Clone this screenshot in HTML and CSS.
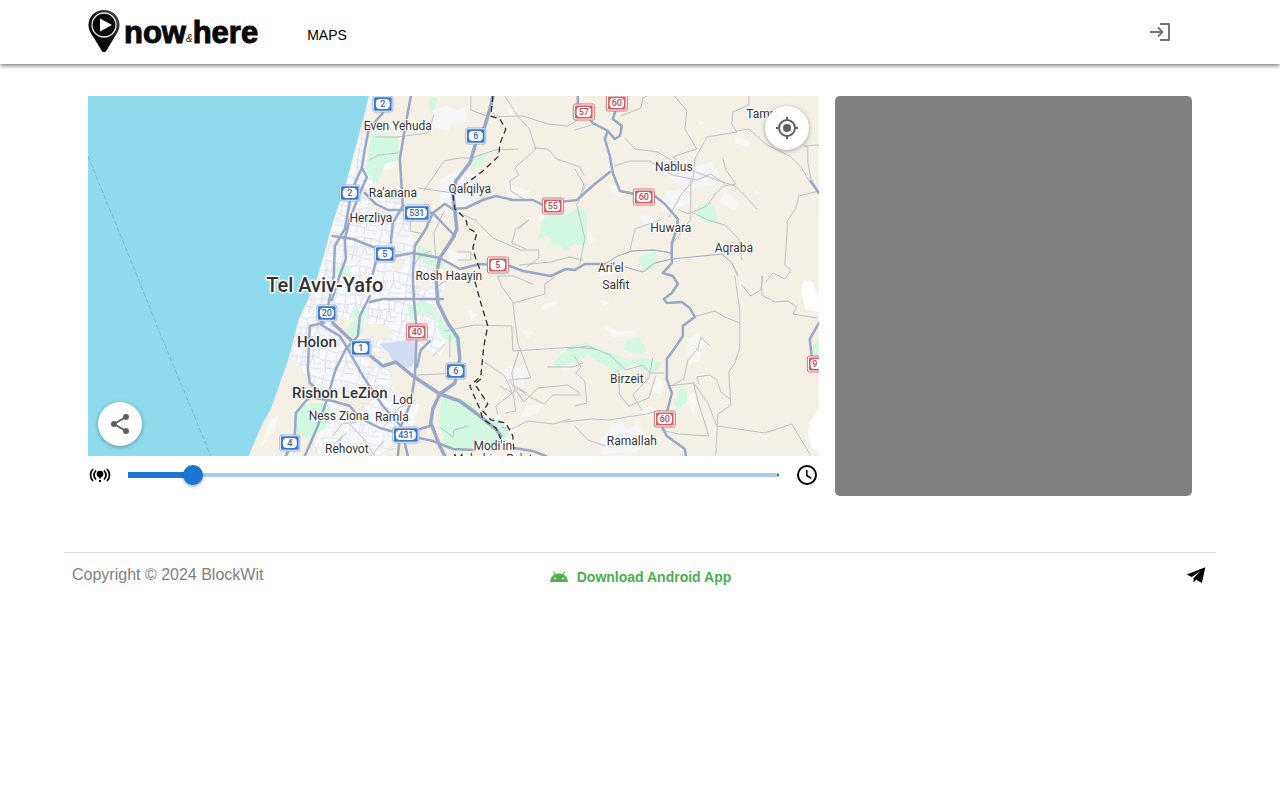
FILE: index.html
```html
<!DOCTYPE html>
<html lang="en">
<head>
<meta charset="utf-8">
<meta name="viewport" content="width=device-width, initial-scale=1">
<title>now&amp;here</title>
<link rel="stylesheet" href="styles.css">
</head>
<body>
<header class="topbar">
  <div class="topbar-inner">
    <a class="logo" href="#" aria-label="now&amp;here home">
      <svg class="logo-pin" viewBox="0 0 32 44" aria-hidden="true">
        <defs><linearGradient id="pinShade" x1="1" y1="0" x2="0.4" y2="0.6"><stop offset="0" stop-color="#555"/><stop offset="1" stop-color="#050505"/></linearGradient></defs>
        <path d="M16 0C7 0 .5 6.500.5 15c0 5 2.500 8.500 5.500 13l7.500 12.500c1.200 2 3.800 2 5 0L26 28c3-4.500 5.500-8 5.500-13C31.500 6.500 25 0 16 0z" fill="url(#pinShade)"/>
        <circle cx="16" cy="15" r="12" fill="#080808" stroke="#e8e8e8" stroke-width="1.300"/>
        <path d="M12 8.500v13L24 15z" fill="#fff"/>
      </svg>
      <span class="logo-word">now</span><span class="logo-amp">&amp;</span><span class="logo-word">here</span>
    </a>
    <nav class="nav"><a href="#">MAPS</a></nav>
    <button class="login" type="button" aria-label="Log in">
      <svg class="icon" viewBox="0 0 24 24" fill="none" stroke="currentColor" stroke-width="2" stroke-linejoin="round"><path d="M12 4h9v16h-9M2 12h12M10 7.500l4.500 4.500-4.500 4.500"/></svg>
    </button>
  </div>
</header>

<main class="content">
  <section class="viewer">
    <div class="map">
      <svg class="map-canvas" viewBox="88 96 731 360" preserveAspectRatio="xMidYMid slice" role="img" aria-label="Map of Tel Aviv-Yafo and surroundings">
        <defs>
          <pattern id="streets" width="34" height="29" patternUnits="userSpaceOnUse" patternTransform="rotate(9)"><path d="M0 4l12 2 9-3 13 1M5 0l-1 14 2 15M14 6l1 9-1 14M0 15l15 0 11-3 8 3M23 3l2 9-3 17M4 22l18 1M25 12l3 8 6-1M30 4v10M9 14v9M18 14l-1 8M24 25l10-1" fill="none" stroke="#d9dfeb" stroke-width="1"/></pattern>
          <g id="blue"><rect x="-10" y="-8" width="20" height="16" rx="2" fill="#fff" stroke="#7fa3d8" stroke-width=".8"/><rect x="-8.800" y="-6.800" width="17.600" height="13.600" rx="1" fill="#3b78c9"/><rect x="-7" y="-5" width="14" height="10" rx="4" fill="#fff"/></g>
          <g id="bluewide"><rect x="-13" y="-8" width="26" height="16" rx="2" fill="#fff" stroke="#7fa3d8" stroke-width=".8"/><rect x="-11.800" y="-6.800" width="23.600" height="13.600" rx="1" fill="#3b78c9"/><rect x="-10" y="-5" width="20" height="10" rx="4" fill="#fff"/></g>
          <g id="red"><rect x="-10.500" y="-8" width="21" height="16" rx="2" fill="#fff" stroke="#dc6f76" stroke-width="1"/><rect x="-8.800" y="-6.500" width="17.600" height="13" rx="1" fill="#d05f66"/><rect x="-7.200" y="-5" width="14.400" height="10" rx="3.500" fill="#fff"/></g>
        </defs>
        <rect x="88" y="96" width="731" height="360" fill="#f4f0e6"/>
        <path class="sea" d="M88 96H369L362 124 355 150 346 184 334 219 319 272 312 291 299 319 289 358 271 409 262 425 249 456H88z"/>
        <path class="boundary" d="M88 156 137 275 158 328 178 376 211 456"/>

        <g class="city">
          <path d="M369 98 362 128 346 187 334 222 320 274 300 320 292 358 316 390 350 398 386 402 398 380 380 350 406 338 430 312 436 280 414 246 408 205 380 196 372 170 365 150z"/>
          <path d="M392 258 440 264 450 280 434 310 446 340 440 356 410 340z"/>
          <path d="M300 405l30-5 25 15 20-15 45 4-10 30-30 20-60 2z"/>
        </g>
        <g class="village">
          <path d="M440 180l20-12 18 8 2 20-24 20-16-5zM432 110l14-4 12 4 10-3-2 16-14 2-4 6-13-4zM652 166l22-6 24 6 14-4 8 14-10 10-14 0-8 6-16-14zM667 192l14-3 14 12-22 8-12 3 0-10zM724 190l16 14-6 6-14-7zM600 440l18-22 10 12 12-10 5 20-8 12-36 2zM484 420l14-4 8 4 10 24-22 6-8-14zM640 214l14 2 6 10-16 4zM598 264l24-2-4 12-20 3z"/>
        </g>
        <path d="M369 98 346 187 320 274 300 320 292 358 316 390 386 402 398 380 380 350 406 338 438 350 446 330 436 310 448 280 414 246 408 205 380 196 365 150z" fill="url(#streets)"/>
        <path d="M300 410l70-8 40 12-14 36-80 4z" fill="url(#streets)" opacity=".65"/>
        <g class="sand">
          <path d="M292 358 303 369 306 394 294 416 289 440 281 456H249L262 425 271 409zM330 312l28 12 28 0 10 10-16 6-22-2-12 4-14-16zM404 196l26 16-10 16-10 0zM394 260l12 0-4 10-10 2zM388 366l24 10-2 24-14 2zM364 348l14 6-4 12-10-8zM374 200l10 6-6 8-10-8zM420 270l12 2-2 16-10 2z"/>
        </g>
        <g class="pale">
          <path d="M270 420l8-4-3 15-9 10-6 8zM384 150l12 4 2 12-14 4zM447 250l18 3-4 12-12-4zM510 185l20 6-4 9-17-5zM575 235l14-4 8 10-14 6zM540 210l16-5 5 8-20 8zM610 185l18 3-5 9-11-3zM735 135l16 8-4 4-12-4zM544 304l16-3-7 7-12 2zM603 324l16 8 18-2-4 6-20 2zM500 370l28-7-4 22-13 5zM526 406l18-2-7 10-16 4zM687 340l12-8 6 11-6 18-10 4zM655 375l9 7-3 13-10-5zM645 405l15 5-4 9-14-4zM505 420l14 8-6 9-11-9zM693 390l5 12-5 11-6-10zM508 107l6-5 4 9-8 4zM698 120l6 2-3 5zM560 360l14 4-8 8-10-4zM468 310l10 4-6 8zM522 330l12 2-6 6zM754 190l6 2-4 4zM600 300l10 2-6 5z"/>
        </g>
        <g class="park">
          <path d="M371 133l27 5 1 22-14 4-7 19-12-10zM472 157l17-5-7 13-11 5zM430 96l8 3-6 13-3-3zM543 219l12-6 12 2 13-9 7 7 1 33-13-2-9 8-7-7-7 0-4-10-10 4zM698 206l12-4 6 9 3 13-14-2-7-5zM640 256l17-5-1 17-11 2-6-8zM418 245l18 10 10 15-16-4-14-8zM407 308l15-8 11 5 4 15-13-8-13 7zM436 312l16 20 8 0 2 16-21-12zM553 363l19-18 15-2 22 9 22 8 14-2 18 5-9 11-22-9-15 8-29-18-30 14zM626 340l14-3 7 15-13 2-10-4zM680 387l8 3-1 12-9 7-4-6zM442 393l30 10 12 14 18 4 8 13-12 12-36 6-16-5-7-24zM298 405l24-3 9 5-6 22-18 10-11-7zM346 330l14-18 7-2-5 25-10 1zM353 310l8-4-4 12-8 0zM333 268l14-3 5 8-12 5z"/>
        </g>
        <path d="M379 344l29-4 9 3 0 19-8 6-15-5-5-10z" fill="#d2dcf4"/>
        <path d="M804 281l8 0 7 17v14l-13-3-5-18zM810 423l9-16v46l-8-7-3-12z" fill="#fff"/>
        <path d="M813 348l6-10v17l-6 1z" fill="#d3f8e2"/>

        <g class="lane">
          <path d="M471 96v14l16 6M491 117l32-1 25 8 20 2 16-10M505 96l14 22 10 10 7 21-21 19 4 7-9 6 1 10 13 8M534 148l14 1 9 10 23 8 4 8M472 158l23-8 24-1M424 191l20-30 16-3 14 0M419 188l34 5M376 137l22 0 30-4 6-18M370 160l9-5 19-2"/>
          <path d="M455 211l20 9 18 18 28 12 18 0v8l-12 9M519 229l10-9-13 9-4 14 14 6M520 265l31-3 19-5 13 3M436 258l-2-25 10-21M424 234l-14-3 1-10M458 260h13v-8h-14"/>
          <path d="M575 130l20-6M621 116l20-8 2-10 14-7 16 3 14 17-2 18 12 20-19 6-5 2 4 3M625 138l10 11 23 3 17 10 16 8 23 9 21 7 13 13 9 10"/>
          <path d="M615 166l15-5 20 0 22 14 25 5 14-6 14 10M749 96v9l-16 7-1 12 5 8-30 5-12 22-2 22-12 14-12 22M737 131l12-2 18 16 23 11 12 12 9 16M723 158l3 12 10 14-12 2-7 6-10 14-18 8-10-4M811 179l-3-17v-15l-4-1 15-1M819 191l-20 5-3 12-8 12-3 45 6 5-6 9-12-6-7 9M691 179v40l-17 23-4 13M692 212l16 8 17 5 14 14 3 21M660 220l-25 9-5 22M575 169l9 15-4 13"/>
          <path d="M632 251l20-1 16 2M586 184l-9 21 8 33-5 26M498 276l4 11 12 16 31-9v-10l10-7M513 303l5 40 13 35-22 2 15 22 14-14 30-3 12 8M445 331l30-6 37 1 1 25 62-4 20 2M519 351l-7 22 3 18-19 15 2 8M568 349l20-3 22 9 16 15 17-5 7 8 14 0M548 367l25 0 10-4M515 386l12 7M565 422l27-3 18 1 17-3 20-3 14-4"/>
          <path d="M575 357l6 10-5 6 9 8 2 22-12 3M575 426l13 14 18 6M642 410l-9-15 16-17 4-20M656 376l-7 22-20 8-9-11-2-24M668 386l26-3 14 20 9 23 28 4 20 3 27-9 18 30M673 385l11-6 4-19 10-11 3-12 9 9M694 317l10-3 11-3 10 6 15 6M735 276l5 35v37l-5 15-6 9 2 33-13 9-2 41M699 384l-2-7 13-2 7 5 4 12 9 7M661 430l18 4 30 2-11-35-4-17M762 276v19l13 7 13-1 9 6-4 7 24 4M742 285l9 11 10-6 2-14"/>
          <path d="M498 276l16 0 18 8M500 386l13 7 3 18-10 2M517 388l10 7 17 9 9-9 27 0M483 361l22 15 7 16M468 426l-14 4-1 7-12-9M501 427l11 2 16-8 26 3 16-5"/>
          <path d="M438 286l11-7-1-8M413 267l8-12 10-4M450 357v-22M433 356l12-12M417 375l22-1 18-1M333 436l9-12 15-2M342 436l-6 18M371 456l13-15M385 426l14-18 16-8M350 424l14 15 11 17M333 445l14-12"/>
        </g>
        <g class="road">
          <path d="M383 113 369 129 365 149 362 168 352 190 345 229 335 246 334 276 327 313M362 168 367 177 360 193 350 219 345 239 346 259 339 278 332 300"/>
          <path d="M411 96 405 129 400 159 403 206 393 223 391 243M376 248v13l-3 13"/>
          <path d="M365 193 376 204 388 210 403 210 433 213 445 204 453 209 466 208 483 200 496 196 513 200 533 200 543 205 560 202 577 200 595 184 610 172"/>
          <path d="M578 96v8l15 19 15 8 7 8 5-3 2-10-9-7 4-12v-10M608 131l-3 8 5 17 3 17 7 18 15 3 20 2 10 8 13 15-1 10-5 14v20l-9 10"/>
          <path d="M663 273l10 3 5 8-6 9-8 6 3 4 15-1 8 6 5 9-12 9v10l-8 12-8 11v20l5 14-4 16-6 17 5 10 18 13 1 7"/>
          <path d="M333 236 353 239 376 248 396 256 413 253 440 258 460 269 480 264 510 266 523 271 551 276 566 269 575 270 585 264 605 264"/>
          <path d="M433 213 426 229 415 246 413 276 414 299 417 330 415 376 411 403 401 426 398 456M401 426l7 30M433 213 455 236"/>
          <path d="M370 302 383 299 413 299 443 299M370 296 360 316 358 336 346 349 336 369 333 379 325 406 318 426 305 456"/>
          <path d="M348 349 363 376 383 406 401 426M327 313l-7 11 20 12 8 13M310 326 308 369 310 383 318 390 306 401 296 413 295 436 286 456M310 326l14-3"/>
          <path d="M310 397 333 401 350 406 360 418 380 428 406 435 433 441 453 449 475 450M420 429 430 426 433 409M514 448l19 3 13 5M430 341l-9 9-4 17"/>
          <path d="M811 181 819 193M819 323 810 339 812 358 818 369"/>
        </g>
        <g class="highway">
          <path d="M493 96 491 106 485 126 476 143 470 163 456 181 453 193 455 211 457 229 453 238 440 258 436 276 438 303 448 323 458 338 460 359 455 383 440 394 433 409 431 423 440 446 445 456"/>
          <path d="M333 323 350 339 361 348 383 366 396 362 413 376 440 394 460 401 476 413 496 429 501 436"/>
        </g>
        <g class="lane lane-strong">
          <path d="M605 264 618 256 632 251 655 250 670 253M625 267l18 5 12-9 17-4 50-5 10 9 6 13"/>
        </g>
        <path class="border" d="M493 96l-2 20 9 3 6 10-6 15-1 12-16 15-17 13-13 10 2 15 11 10 2 9 9 5-4 15 3 11 4 10-5 12 6 22 7 23-4 20-3 30-11 10 10 23 3 10 13 9 5 11M481 379l-6 5 13 20-5 7 8 9 15 3 7 13 1 17"/>

        <g class="shields">
          <use href="#blue" x="383" y="104"/><text x="383" y="107">2</text>
          <use href="#blue" x="476" y="136"/><text x="476" y="139">6</text>
          <use href="#blue" x="350" y="193"/><text x="350" y="196">2</text>
          <use href="#bluewide" x="417" y="213"/><text x="417" y="216">531</text>
          <use href="#blue" x="385" y="254"/><text x="385" y="257">5</text>
          <use href="#blue" x="327" y="313"/><text x="327" y="316">20</text>
          <use href="#blue" x="361" y="348"/><text x="361" y="351">1</text>
          <use href="#blue" x="456" y="371"/><text x="456" y="374">6</text>
          <use href="#bluewide" x="406" y="435"/><text x="406" y="438">431</text>
          <use href="#blue" x="290" y="443"/><text x="290" y="446">4</text>
        </g>
        <g class="shields shields-red">
          <use href="#red" x="617" y="103"/><text x="617" y="106">60</text>
          <use href="#red" x="584" y="112"/><text x="584" y="115">57</text>
          <use href="#red" x="644" y="197"/><text x="644" y="200">60</text>
          <use href="#red" x="553" y="206"/><text x="553" y="209">55</text>
          <use href="#red" x="498" y="265"/><text x="498" y="268">5</text>
          <use href="#red" x="417" y="332"/><text x="417" y="335">40</text>
          <use href="#red" x="665" y="419"/><text x="665" y="422">60</text>
          <use href="#red" x="818" y="364"/><text x="815" y="367">9</text>
        </g>
        <g class="towns">
          <text x="398" y="130">Even Yehuda</text>
          <text x="393" y="197">Ra'anana</text>
          <text x="371" y="222">Herzliya</text>
          <text x="470" y="193">Qalqilya</text>
          <text x="449" y="280">Rosh Haayin</text>
          <text x="674" y="171">Nablus</text>
          <text x="671" y="232">Huwara</text>
          <text x="734" y="252">Aqraba</text>
          <text x="611" y="272">Ari'el</text>
          <text x="616" y="289">Salfit</text>
          <text x="627" y="383">Birzeit</text>
          <text x="632" y="445">Ramallah</text>
          <text x="770" y="118">Tammun</text>
          <text x="403" y="404">Lod</text>
          <text x="339" y="420">Ness Ziona</text>
          <text x="392" y="421">Ramla</text>
          <text x="347" y="453">Rehovot</text>
          <text x="493" y="450">Modi'in</text>
          <text x="493" y="463">Makabim-Re'ut</text>
        </g>
        <g class="towns cities">
          <text x="317" y="347">Holon</text>
          <text x="340" y="398">Rishon LeZion</text>
          <text class="capital" x="325" y="292">Tel Aviv-Yafo</text>
        </g>
      </svg>
      <button class="fab fab-locate" type="button" aria-label="My location">
        <svg class="icon" viewBox="0 0 24 24" fill="none" stroke="currentColor" stroke-width="2"><circle cx="12" cy="12" r="8"/><circle cx="12" cy="12" r="4" fill="currentColor" stroke="none"/><path d="M12 1v3M12 20v3M1 12h3M20 12h3"/></svg>
      </button>
      <button class="fab fab-share" type="button" aria-label="Share">
        <svg class="icon" viewBox="0 0 24 24" fill="currentColor"><path d="M18 5 6 12l12 7" fill="none" stroke="currentColor" stroke-width="2"/><circle cx="18" cy="5" r="3"/><circle cx="6" cy="12" r="3"/><circle cx="18" cy="19" r="3"/></svg>
      </button>
    </div>
    <div class="timeline">
      <svg class="icon" viewBox="0 0 24 24" fill="none" stroke="currentColor" stroke-width="1.700" aria-hidden="true"><path d="M5 6c-3.300 3.500-3.300 8.500 0 12M8 7.500c-2.400 2.700-2.400 6.300 0 9M19 6c3.300 3.500 3.300 8.500 0 12M16 7.500c2.400 2.700 2.400 6.300 0 9"/><circle cx="12" cy="11" r="3.300" fill="currentColor" stroke="none"/><path d="M12 12v3.500M12 17v2" stroke-width="2"/></svg>
      <input class="slider" type="range" min="0" max="100" value="10" aria-label="Time">
      <svg class="icon" viewBox="0 0 24 24" fill="none" stroke="currentColor" stroke-width="2" aria-hidden="true"><circle cx="12" cy="12" r="9"/><path d="M11.800 7v5.500l4.500 2.800" stroke-width="1.500"/></svg>
    </div>
  </section>
  <aside class="player" aria-label="Video"></aside>
</main>

<footer class="footer">
  <span class="copyright">Copyright © 2024 BlockWit</span>
  <a class="download" href="#">
    <svg class="android" viewBox="0 0 20 20" fill="currentColor" aria-hidden="true"><path d="M1 15c.300-3.500 2-6 4.600-7.500L4 4.800l.8-.5 1.700 2.800c2.200-.9 4.800-.9 7 0l1.700-2.800.8.500-1.600 2.700C17 9 18.700 11.500 19 15z"/><circle cx="6" cy="11.500" r=".9" fill="#fff"/><circle cx="14" cy="11.500" r=".9" fill="#fff"/></svg>
    Download Android App
  </a>
  <a class="telegram" href="#" aria-label="Telegram">
    <svg class="plane" viewBox="0 0 20 20" fill="currentColor"><path d="M19.300 2.200.6 9.400l5.200 2.500L15 5.800 7.600 13l-.2 4.300 2.900-2.500 5.600 3.100z"/></svg>
  </a>
</footer>
</body>
</html>
```
FILE: styles.css
```css
* { box-sizing: border-box; }

body {
  margin: 0;
  background: #fff;
  color: #000;
  font-family: "Liberation Sans", Arial, sans-serif;
  font-size: 16px;
}

a { color: inherit; text-decoration: none; }
button { border: 0; background: none; padding: 0; cursor: pointer; font: inherit; }
.icon { display: block; width: 24px; height: 24px; flex: none; }

.topbar {
  background: #fff;
  box-shadow: 0 2px 4px -1px rgba(0, 0, 0, .3), 0 2px 4px rgba(0, 0, 0, .22), 0 1px 6px rgba(0, 0, 0, .12);
}
.topbar-inner {
  display: flex;
  align-items: center;
  max-width: 1152px;
  min-height: 64px;
  margin: 0 auto;
  padding: 0 24px;
}
.logo { display: flex; align-items: center; color: #080808; }
.logo-pin { width: 32px; height: 44px; margin-right: 4px; }
.logo-word { padding-top: 2px; font-size: 31px; line-height: 36px; font-weight: 700; -webkit-text-stroke: 1px #080808; }
.logo-amp { font-size: 10px; font-style: italic; padding-top: 12px; }
.nav { margin-left: 49px; padding-top: 6px; font-size: 14px; line-height: 20px; }
.login { margin-left: auto; padding: 8px; margin-right: 12px; color: #757575; }

.content {
  display: grid;
  grid-template-columns: repeat(12, minmax(0, 1fr));
  gap: 16px;
  max-width: 1152px;
  margin: 0 auto;
  padding: 32px 24px 56px;
}
.viewer { grid-column: span 8; }
.player { grid-column: span 4; min-height: 400px; border-radius: 5px; background: #808080; }

.map { position: relative; height: 360px; overflow: hidden; }
.map-canvas { display: block; width: 100%; height: 100%; }
.fab {
  position: absolute;
  display: grid;
  place-items: center;
  width: 44px;
  height: 44px;
  border-radius: 50%;
  background: #fff;
  color: #5f5f64;
  box-shadow: 0 1px 4px rgba(0, 0, 0, .35);
}
.fab-locate { top: 10px; right: 10px; }
.fab-share { bottom: 10px; left: 10px; }

.sea { fill: #90daee; }
.boundary { fill: none; stroke: #6bc3d2; stroke-width: 1; stroke-dasharray: 5 2; }
.city { fill: #f8f8fa; }
.village { fill: #f5f5f7; }
.sand { fill: #f4f0e6; }
.pale { fill: #f8f6f2; }
.park { fill: #d3f8e2; }
.lane, .road, .highway { fill: none; stroke-linejoin: round; stroke-linecap: round; }
.lane { stroke: #bcc1cc; stroke-width: 1; }
.lane-strong { stroke: #9faabf; }
.road { stroke: #9aa8c5; stroke-width: 2.5; }
.highway { stroke: #9aa8c5; stroke-width: 3.5; }
.border { fill: none; stroke: #2e2e33; stroke-width: 1.3; stroke-dasharray: 6 4; }
.shields { font: 500 9px Roboto, sans-serif; fill: #3566ad; text-anchor: middle; }
.shields-red { fill: #bf4853; }
.towns {
  font: 400 12px Roboto, sans-serif;
  fill: #333238;
  stroke: #fff;
  stroke-width: 2px;
  stroke-linejoin: round;
  paint-order: stroke;
  text-anchor: middle;
}
.cities { font-size: 15px; font-weight: 500; }
.capital { font-size: 20px; stroke-width: 3px; }

.timeline { display: flex; align-items: center; gap: 16px; height: 38px; }
.slider {
  appearance: none;
  flex: 1;
  min-width: 0;
  height: 20px;
  margin: 0 -10px;
  background:
    linear-gradient(#1976d2, #1976d2) 10px center / calc((100% - 20px) * .1) 6px no-repeat,
    linear-gradient(#1976d2, #1976d2) right 10px center / 2px 2px no-repeat,
    linear-gradient(#a9c9eb, #a9c9eb) center / calc(100% - 20px) 4px no-repeat;
}
.slider::-webkit-slider-thumb {
  appearance: none;
  width: 20px;
  height: 20px;
  border-radius: 50%;
  background: #1976d2;
  box-shadow: 0 2px 3px rgba(0, 0, 0, .3);
}

.footer {
  display: grid;
  grid-template-columns: 1fr auto 1fr;
  align-items: center;
  max-width: 1152px;
  margin: 0 auto;
  padding: 8px;
  border-top: 1px solid #dcdcdc;
}
.copyright { color: #808080; line-height: 28px; }
.download {
  display: flex;
  align-items: center;
  gap: 8px;
  padding-top: 4px;
  color: #4caf50;
  font-size: 14px;
  font-weight: 700;
}
.android, .plane { display: block; width: 20px; height: 20px; }
.telegram { justify-self: end; margin-right: 2px; }
```
